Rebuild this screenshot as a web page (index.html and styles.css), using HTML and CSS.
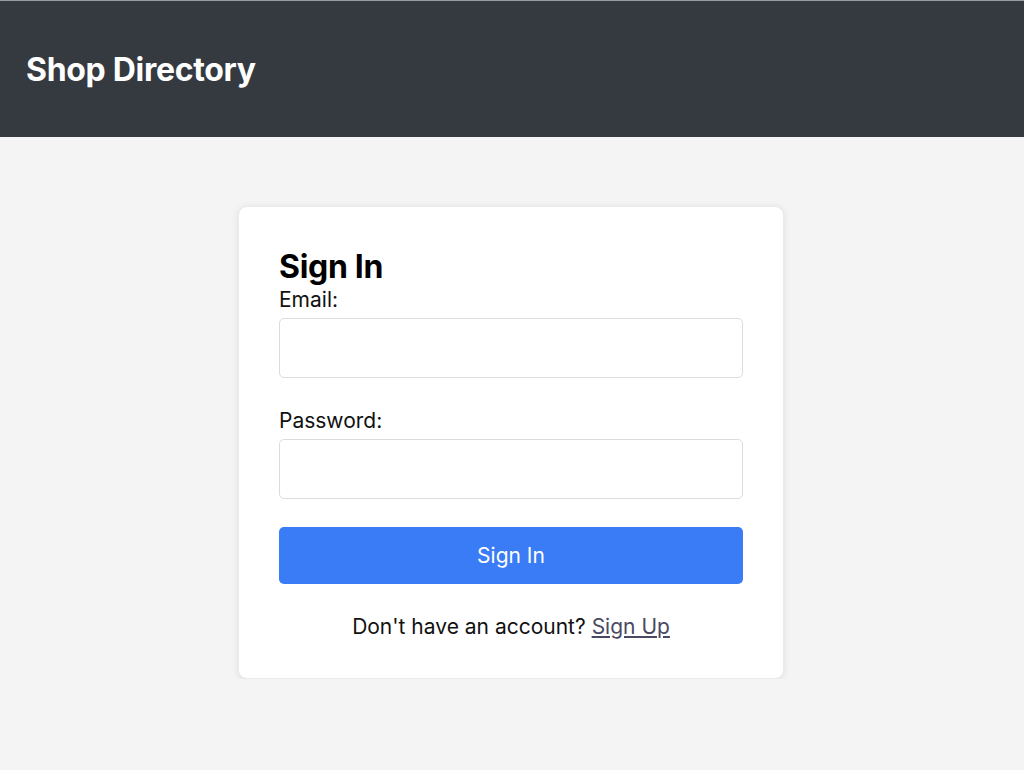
FILE: index.html
```html
<!DOCTYPE html>
<html lang="en">
<head>
<meta charset="utf-8">
<title>Shop Directory - Sign In</title>
<link rel="stylesheet" href="styles.css">
</head>
<body>
<header class="topbar">
  <h1 class="brand">Shop Directory</h1>
</header>
<main class="page">
  <section class="card">
    <h2 class="card-title">Sign In</h2>
    <form class="form">
      <div class="field">
        <label class="field-label" for="email">Email:</label>
        <input class="field-input" id="email" type="email">
      </div>
      <div class="field">
        <label class="field-label" for="password">Password:</label>
        <input class="field-input" id="password" type="password">
      </div>
      <button class="btn-primary" type="button">Sign In</button>
    </form>
    <p class="switch">Don't have an account? <a class="switch-link" href="#">Sign Up</a></p>
  </section>
</main>
</body>
</html>
```

FILE: styles.css
```css
* { box-sizing: border-box; }
html, body {
  margin: 0;
  padding: 0;
  background: #f4f4f4;
  font-family: Inter, "Noto Sans", sans-serif;
  color: #111;
}
.topbar {
  height: 137px;
  background: #343a40;
  border-top: 1px solid #9a9da0;
  display: flex;
  align-items: center;
  padding: 0 26px;
}
.brand {
  margin: 0;
  color: #fff;
  font-size: 32px;
  font-weight: 700;
  letter-spacing: -0.3px;
}
.page {
  display: flex;
  justify-content: center;
  padding: 69px 2px 0 0;
}
.card {
  width: 546px;
  background: #fff;
  border: 1px solid #ebebeb;
  border-radius: 9px;
  box-shadow: 0 1px 7px rgba(0,0,0,0.09);
  padding: 40px 40px 39px;
}
.card-title {
  margin: 0 0 1px;
  font-size: 32px;
  line-height: 39px;
  font-weight: 700;
  color: #000;
  letter-spacing: -0.3px;
}
.form {
  display: flex;
  flex-direction: column;
}
.field {
  display: flex;
  flex-direction: column;
  margin-bottom: 30px;
}
.field + .field {
  margin-bottom: 28px;
}
.field-label {
  font-size: 21px;
  line-height: 25px;
  color: #111;
  margin-bottom: 6px;
}
.field-input {
  height: 60px;
  border: 1px solid #dcdcdc;
  border-radius: 5px;
  font-size: 18px;
  padding: 0 12px;
  background: #fff;
}
.btn-primary {
  height: 57px;
  border: none;
  border-radius: 5px;
  background: #3a7bf6;
  color: #fff;
  font-family: inherit;
  font-size: 21px;
  cursor: pointer;
}
.switch {
  margin: 30px 0 0;
  text-align: center;
  font-size: 21px;
  line-height: 25px;
  color: #111;
}
.switch-link {
  color: #4a4862;
  text-decoration: underline;
}
```
